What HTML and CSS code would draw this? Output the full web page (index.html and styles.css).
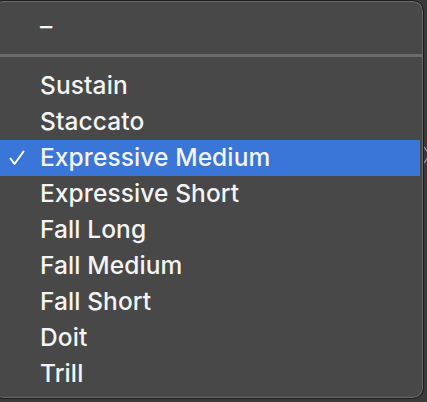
FILE: index.html
```html
<!DOCTYPE html>
<html lang="en">

<head>
    <meta name="viewport" content="width=device-width, initial-scale=1.0">
    <title>Articulation</title>
    <link rel="stylesheet" href="styles.css">
</head>

<body>
    <div class="stage">
        <div class="menu">
            <div class="item top-item">–</div>
            <div class="separator"></div>
            <div class="item">Sustain</div>
            <div class="item">Staccato</div>
            <div class="item selected"><svg class="check" width="16" height="16" viewBox="0 0 16 16"><polyline points="1.5,8.5 5.5,14 14.5,1.5" fill="none" stroke="#ffffff" stroke-width="2" stroke-linecap="round" stroke-linejoin="round" /></svg>Expressive Medium</div>
            <div class="item">Expressive Short</div>
            <div class="item">Fall Long</div>
            <div class="item">Fall Medium</div>
            <div class="item">Fall Short</div>
            <div class="item">Doit</div>
            <div class="item">Trill</div>
        </div>
        <svg class="stepper" width="6" height="30" viewBox="0 0 6 30">
            <polyline points="0,7 3,11 6,7" fill="none" stroke="#a0a0a0" stroke-width="1.2" />
            <polyline points="0,23 3,19 6,23" fill="none" stroke="#a0a0a0" stroke-width="1.2" />
        </svg>
    </div>
</body>

</html>
```

FILE: styles.css
```css
body {
    margin: 0;
    background: #3a3a3a;
    font-family: 'Inter', 'Helvetica Neue', sans-serif;
    overflow: hidden;
}

.stage {
    position: relative;
    width: 427px;
    height: 402px;
}

.menu {
    margin-left: -8px;
    width: 432px;
    height: 399px;
    box-sizing: border-box;
    padding-top: 8px;
    background: #484848;
    border: 1px solid #1c1c1c;
    box-shadow: inset 0 0 0 1px #6a6a6a;
    border-radius: 11px;
    color: #f4f4f4;
}

.item {
    position: relative;
    height: 36px;
    line-height: 35px;
    padding-left: 47px;
    font-size: 24.5px;
    font-weight: 500;
    letter-spacing: 0.1px;
}

.top-item {
    height: 36px;
    margin-bottom: 9px;
}

.separator {
    height: 3px;
    background: #6b6b6b;
    margin-bottom: 11px;
}

.selected {
    background: #3a76d8;
    margin-right: 3px;
}

.check {
    position: absolute;
    left: 16px;
    top: 10px;
}

.stepper {
    position: absolute;
    left: 424px;
    top: 140px;
}
```
